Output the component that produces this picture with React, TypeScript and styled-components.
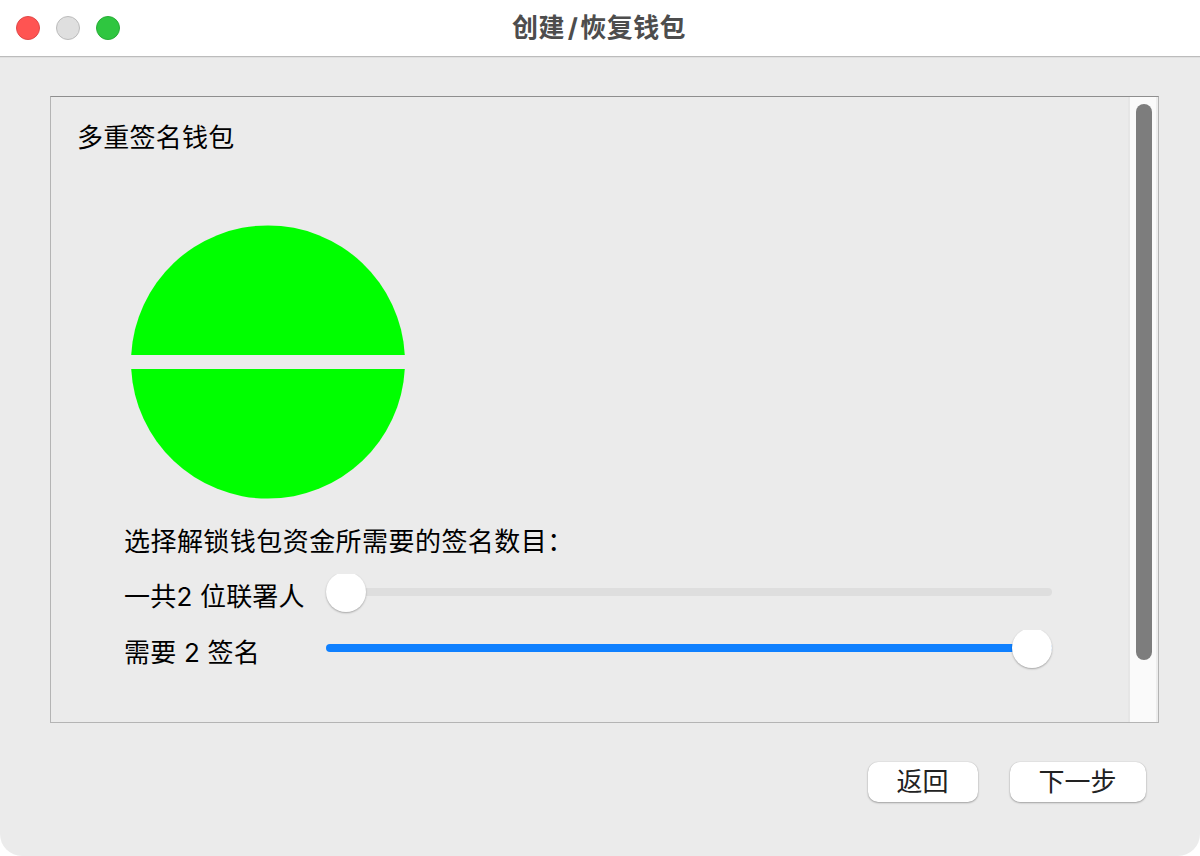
import React from 'react';
import styled, { createGlobalStyle } from 'styled-components';

const Global = createGlobalStyle`
  * { box-sizing: border-box; }
  body { margin: 0; background: #fff; }
`;

const Window = styled.main`
  width: 1200px;
  height: 856px;
  display: flex;
  flex-direction: column;
  overflow: hidden;
  background: #ebebeb;
  border-radius: 0 0 22px 22px;
  color: #000;
  font: 26px/36px Inter, 'Noto Sans CJK SC', sans-serif;
  letter-spacing: 0.4px;
`;

const TitleBar = styled.header`
  flex: none;
  height: 57px;
  display: grid;
  grid-template-columns: 120px 1fr 120px;
  align-items: center;
  padding: 0 16px 1px;
  background: #fff;
  border-bottom: 1px solid #bcbcbc;
  box-shadow: 0 1px 0 #e0e0e0;
`;

const Lights = styled.div`
  display: flex;
  gap: 16px;
`;

const Light = styled.span<{ $fill: string; $edge: string }>`
  width: 24px;
  height: 24px;
  border-radius: 50%;
  background: ${(p) => p.$fill};
  border: 1px solid ${(p) => p.$edge};
`;

const Title = styled.h1`
  margin: 0;
  text-align: center;
  font-size: 26px;
  line-height: 36px;
  font-weight: 700;
  color: #4d4d4d;
  padding-right: 2px;
`;

const Slash = styled.span`
  padding: 0 2px 0 3px;
`;

const Panel = styled.section`
  flex: none;
  display: flex;
  width: 1109px;
  height: 627px;
  margin: 39px 0 0 50px;
  border: 1px solid #b4b4b4;
  border-top-color: #8e8e8e;
`;

const Content = styled.div`
  flex: 1;
  padding: 23px 26px;
`;

const Heading = styled.h2`
  margin: 0;
  font-size: 26px;
  font-weight: 400;
  letter-spacing: 0.25px;
`;

const Chart = styled.svg`
  display: block;
  margin: 69px 0 0 54px;
`;

const Form = styled.div`
  padding: 25px 0 0 47px;
`;

const Row = styled.div`
  display: grid;
  grid-template-columns: 202px 726px;
  align-items: center;
  height: 56px;
`;

const Label = styled.span`
  padding-top: 10px;
  letter-spacing: 0.2px;
`;

const Prompt = styled.p`
  margin: 0 0 4px;
  letter-spacing: 0.45px;
`;

const Track = styled.div<{ $full?: boolean }>`
  display: flex;
  align-items: center;
  justify-content: ${(p) => (p.$full ? 'flex-end' : 'flex-start')};
  height: 8px;
  border-radius: 4px;
  background: ${(p) => (p.$full ? '#0f80ff' : '#dedede')};
`;

const Knob = styled.span`
  flex: none;
  width: 40px;
  height: 40px;
  border-radius: 50%;
  background: #fff;
  box-shadow: 0 1px 2px rgba(0, 0, 0, 0.3);
  clip-path: inset(2px -4px -4px -4px);
`;

const ScrollBar = styled.div`
  width: 30px;
  padding: 7px 6px;
  background: #fafafa;
  border-left: 2px solid #e6e6e6;
  border-right: 2px solid #ededed;
`;

const Thumb = styled.div`
  width: 16px;
  height: 556px;
  border-radius: 8px;
  background: #7d7d7d;
`;

const Footer = styled.footer`
  display: flex;
  justify-content: flex-end;
  gap: 32px;
  padding: 39px 54px 0 0;
`;

const Button = styled.button<{ $width: number }>`
  width: ${(p) => p.$width}px;
  height: 40px;
  padding: 0 1px 0 0;
  border: 0;
  border-radius: 10px;
  background: #fff;
  color: #222;
  font: inherit;
  box-shadow: 0 0 1px rgba(0, 0, 0, 0.25), 0 1px 2px rgba(0, 0, 0, 0.3);
`;

export default function App() {
  return (
    <Window>
      <Global />
      <TitleBar>
        <Lights>
          <Light $fill="#ff5452" $edge="#e04848" />
          <Light $fill="#dfdfdf" $edge="#bcbcbc" />
          <Light $fill="#2fc640" $edge="#27ad36" />
        </Lights>
        <Title>创建<Slash>/</Slash>恢复钱包</Title>
      </TitleBar>
      <Panel>
        <Content>
          <Heading>多重签名钱包</Heading>
          <Chart width="274" height="274" viewBox="0 0 274 274" fill="#00ff00">
            <path d="M0.2 130A137 137 0 0 1 273.8 130Z" />
            <path d="M0.2 144A137 137 0 0 0 273.8 144Z" />
          </Chart>
          <Form>
            <Prompt>选择解锁钱包资金所需要的签名数目：</Prompt>
            <Row>
              <Label>一共2 位联署人</Label>
              <Track><Knob /></Track>
            </Row>
            <Row>
              <Label>需要 2 签名</Label>
              <Track $full><Knob /></Track>
            </Row>
          </Form>
        </Content>
        <ScrollBar><Thumb /></ScrollBar>
      </Panel>
      <Footer>
        <Button $width={110}>返回</Button>
        <Button $width={136}>下一步</Button>
      </Footer>
    </Window>
  );
}
